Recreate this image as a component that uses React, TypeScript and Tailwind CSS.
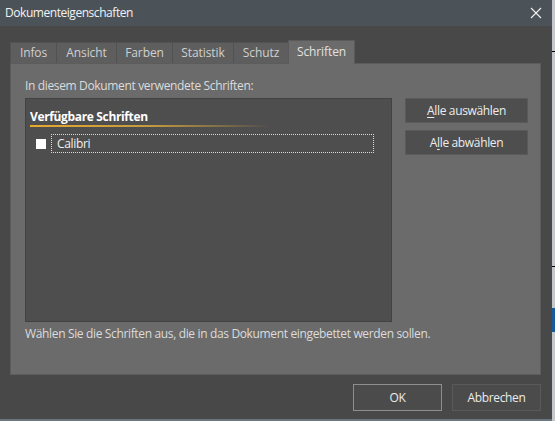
const tabs = [
  { label: 'Infos', w: 'w-[46px]' },
  { label: 'Ansicht', w: 'w-[60px]' },
  { label: 'Farben', w: 'w-[56px]' },
  { label: 'Statistik', w: 'w-[61px]' },
  { label: 'Schutz', w: 'w-[55px]' },
];

const font = { fontFamily: '"Open Sans", "Noto Sans", sans-serif' };

export default function App() {
  return (
    <div className="flex h-[421px] w-[555px] bg-[#c4c8cc] text-[12px] tracking-[-0.35px] text-[#dcdcdc]" style={font}>
      {/* dialog window */}
      <div className="flex h-[421px] w-[552px] flex-col border-b-2 border-[#6a7680] bg-[#484848]">
        {/* title bar */}
        <div className="flex h-[26px] items-center justify-between bg-[#4b5359] pl-[5px] pr-[10px] text-[#f2f2f2]">
          <span className="tracking-[-0.45px]">Dokumenteigenschaften</span>
          <svg width="12" height="12" viewBox="0 0 12 12" className="text-[#f0f0f0]">
            <path d="M1 1 L11 11 M11 1 L1 11" stroke="currentColor" strokeWidth="1.1" fill="none" />
          </svg>
        </div>

        <div className="flex flex-1 flex-col pl-[10px] pr-[11px] pt-[14px]">
          {/* tabs */}
          <div className="flex h-[23px] items-end">
            {tabs.map((t) => (
              <div
                key={t.label}
                className={`flex h-[21px] items-center justify-center border-l border-t border-[#525252] bg-[#5e5e5e] tracking-[-0.1px] text-[#d0d0d0] ${t.w}`}
              >
                {t.label}
              </div>
            ))}
            <div className="relative z-10 -mb-px flex h-[24px] w-[67px] items-center justify-center border-x border-t border-[#5a5a5a] bg-[#6b6b6b] pb-[2px] tracking-[-0.1px] text-[#e2e2e2]">
              Schriften
            </div>
          </div>

          {/* panel */}
          <div className="flex h-[312px] flex-col border border-[#5c5c5c] bg-[#6b6b6b] pl-[14px] pt-[14px]">
            <div className="h-[16px] leading-[16px]">In diesem Dokument verwendete Schriften:</div>
            <div className="mt-[4px] flex">
              <div className="h-[224px] w-[367px] border border-[#424242] bg-[#4e4e4e] pt-[10px]">
                <div className="ml-[4px] h-[16px] font-bold leading-[16px] text-white">Verfügbare Schriften</div>
                <div className="ml-[4px] h-[2px] w-[240px] bg-gradient-to-r from-[#e8a82c] via-[#c49a40] to-transparent" />
                <div className="mt-[7px] flex items-center">
                  <div className="ml-[10px] h-[10px] w-[10px] bg-white" />
                  <div className="ml-[5px] flex h-[19px] w-[323px] items-center border border-dotted border-[#d8d8d8] pl-[5px] text-[#f0f0f0]">
                    Calibri
                  </div>
                </div>
              </div>
              <div className="ml-[13px] flex flex-col gap-[7px]">
                <button className="flex h-[25px] w-[123px] items-center justify-center border border-[#5a5a5a] bg-[#4e4e4e] text-[#ececec]">
                  <span><span className="underline underline-offset-2">A</span>lle auswählen</span>
                </button>
                <button className="flex h-[25px] w-[123px] items-center justify-center border border-[#5a5a5a] bg-[#4e4e4e] text-[#ececec]">
                  <span>A<span className="underline underline-offset-2">l</span>le abwählen</span>
                </button>
              </div>
            </div>
            <div className="mt-[4px] h-[16px] leading-[16px]">
              Wählen Sie die Schriften aus, die in das Dokument eingebettet werden sollen.
            </div>
          </div>

          {/* footer buttons */}
          <div className="mt-[9px] flex justify-end gap-[10px]">
            <button className="flex h-[27px] w-[89px] items-center justify-center border border-[#8e8e8e] bg-[#4b4b4b] text-[#ececec]">
              OK
            </button>
            <button className="flex h-[27px] w-[89px] items-center justify-center border border-[#5a5a5a] bg-[#4b4b4b] text-[#ececec]">
              Abbrechen
            </button>
          </div>
        </div>
      </div>

      {/* background peeking through at the right edge */}
      <div className="flex w-[3px] flex-col">
        <div className="h-[51px]" />
        <div className="h-px bg-black" />
        <div className="h-[214px]" />
        <div className="h-px bg-black" />
        <div className="h-[41px]" />
        <div className="h-[24px] bg-[#1a5a9a]" />
      </div>
    </div>
  );
}
